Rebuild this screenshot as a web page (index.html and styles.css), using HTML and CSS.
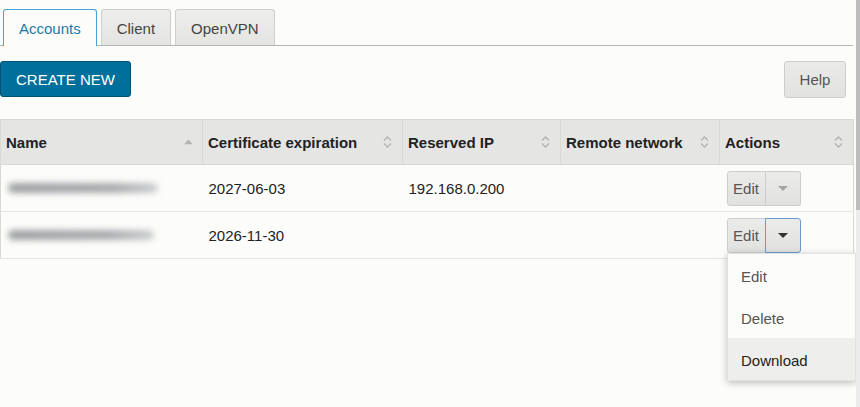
FILE: index.html
```html
<!DOCTYPE html>
<html lang="en">
<head>
    <meta charset="UTF-8">
    <meta name="viewport" content="width=device-width, initial-scale=1.0">
    <title>OpenVPN Accounts</title>
    <link rel="stylesheet" href="styles.css">
</head>
<body>
    <div class="page">
        <ul class="tabs">
            <li class="tab active">Accounts</li>
            <li class="tab">Client</li>
            <li class="tab">OpenVPN</li>
        </ul>

        <div class="toolbar">
            <button type="button" class="btn btn-primary">CREATE NEW</button>
            <button type="button" class="btn btn-help">Help</button>
        </div>

        <table class="grid">
            <colgroup>
                <col class="col-name">
                <col class="col-cert">
                <col class="col-ip">
                <col class="col-net">
                <col class="col-act">
            </colgroup>
            <thead>
                <tr>
                    <th>Name <span class="sort sort-up"><svg width="9" height="5" viewBox="0 0 9 5"><path d="M0 5 L4.5 0 L9 5 Z" fill="#b3b3b3"/></svg></span></th>
                    <th>Certificate expiration <span class="sort"><svg width="9" height="12" viewBox="0 0 9 12"><path d="M1 4.5 L4.5 1 L8 4.5 M1 7.5 L4.5 11 L8 7.5" fill="none" stroke="#b3b3b3" stroke-width="1.4"/></svg></span></th>
                    <th>Reserved IP <span class="sort"><svg width="9" height="12" viewBox="0 0 9 12"><path d="M1 4.5 L4.5 1 L8 4.5 M1 7.5 L4.5 11 L8 7.5" fill="none" stroke="#b3b3b3" stroke-width="1.4"/></svg></span></th>
                    <th>Remote network <span class="sort"><svg width="9" height="12" viewBox="0 0 9 12"><path d="M1 4.5 L4.5 1 L8 4.5 M1 7.5 L4.5 11 L8 7.5" fill="none" stroke="#b3b3b3" stroke-width="1.4"/></svg></span></th>
                    <th>Actions <span class="sort"><svg width="9" height="12" viewBox="0 0 9 12"><path d="M1 4.5 L4.5 1 L8 4.5 M1 7.5 L4.5 11 L8 7.5" fill="none" stroke="#b3b3b3" stroke-width="1.4"/></svg></span></th>
                </tr>
            </thead>
            <tbody>
                <tr>
                    <td><div class="blurred"></div></td>
                    <td>2027-06-03</td>
                    <td>192.168.0.200</td>
                    <td></td>
                    <td>
                        <div class="split">
                            <button type="button" class="split-main">Edit</button>
                            <button type="button" class="split-caret"><span class="caret caret-light"></span></button>
                        </div>
                    </td>
                </tr>
                <tr>
                    <td><div class="blurred short"></div></td>
                    <td>2026-11-30</td>
                    <td></td>
                    <td></td>
                    <td>
                        <div class="split">
                            <button type="button" class="split-main">Edit</button>
                            <button type="button" class="split-caret focused"><span class="caret"></span></button>
                        </div>
                    </td>
                </tr>
            </tbody>
        </table>

        <!-- open dropdown of the second row -->
        <ul class="menu">
            <li>Edit</li>
            <li>Delete</li>
            <li class="hover">Download</li>
        </ul>
    </div>
    <div class="scrollbar"><div class="thumb"></div></div>
</body>
</html>
```

FILE: styles.css
```css
body {
    font-family: "Liberation Sans", Arial, sans-serif;
    font-size: 15px;
    background-color: #fcfcfa;
    color: #222;
    margin: 0;
    padding: 0;
    min-height: 100vh;
}

.page {
    position: relative;
    width: 853px;
    min-height: 398px;
    padding-top: 9px;
}

.tabs {
    list-style: none;
    margin: 0;
    padding: 0 0 0 3px;
    display: flex;
    gap: 4px;
    border-bottom: 1px solid #b5b5b5;
}

.tab {
    height: 35px;
    line-height: 37px;
    padding: 0 15px;
    border: 1px solid #cfcfcf;
    border-bottom: none;
    border-radius: 3px 3px 0 0;
    background: linear-gradient(#ededeb, #e4e5e3);
    color: #444;
    margin-bottom: -1px;
}

.tab.active {
    background: #fcfcfa;
    border-color: #4aa3d8;
    color: #1c7aa8;
    height: 36px;
}

.toolbar {
    display: flex;
    justify-content: space-between;
    margin-top: 15px;
    padding-right: 7px;
}

.btn {
    font-family: inherit;
    font-size: 15px;
    height: 36px;
    border-radius: 3px;
    cursor: pointer;
    white-space: nowrap;
}

.btn-primary {
    background-color: #006f9b;
    border: 1px solid #005274;
    color: #ffffff;
    padding: 0 15px;
}

.btn-help {
    background: linear-gradient(#eaebe9, #e2e3e1);
    border: 1px solid #cdcdcd;
    color: #555;
    width: 62px;
    height: 37px;
}

.grid {
    margin-top: 21px;
    width: 853px;
    border-collapse: collapse;
    table-layout: fixed;
}

.col-name { width: 202px; }
.col-cert { width: 200px; }
.col-ip { width: 158px; }
.col-net { width: 159px; }
.col-act { width: 134px; }

.grid th,
.grid td {
    text-align: left;
    padding: 0 6px;
}

.grid th {
    background-color: #e5e6e4;
    height: 44px;
    padding: 0 5px;
    font-weight: bold;
    color: #222;
    border: 1px solid #d8d9d7;
    position: relative;
}

.sort {
    position: absolute;
    right: 10px;
    top: 50%;
    transform: translateY(-50%);
    line-height: 0;
}

.sort-up {
    right: 9px;
}

.grid td {
    height: 46px;
    border-bottom: 1px solid #e4e4e2;
    color: #222;
}

.grid td:first-child {
    border-left: 1px solid #d8d9d7;
}

.grid td:last-child {
    border-right: 1px solid #d8d9d7;
    padding-left: 7px;
}

.blurred {
    width: 150px;
    height: 10px;
    margin-left: 1px;
    background: linear-gradient(to right, #8e9093, #9a9c9f 70%, #c4c6c8);
    border-radius: 5px;
    filter: blur(3px);
    opacity: 0.85;
}

.blurred.short {
    width: 146px;
}

.split {
    display: flex;
    width: 74px;
}

.split-main,
.split-caret {
    font-family: inherit;
    font-size: 15px;
    height: 35px;
    background: linear-gradient(#ebecea, #e1e2e0);
    border: 1px solid #cdcdcd;
    color: #555;
    cursor: pointer;
    padding: 0;
}

.split-main {
    width: 39px;
    border-radius: 3px 0 0 3px;
}

.split-caret {
    width: 35px;
    border-left: none;
    border-radius: 0 3px 3px 0;
    display: flex;
    align-items: center;
    justify-content: center;
}

.split-caret.focused {
    border: 1px solid #6b9bd1;
    margin-left: -1px;
    width: 36px;
}

.caret {
    width: 0;
    height: 0;
    border-left: 5px solid transparent;
    border-right: 5px solid transparent;
    border-top: 5px solid #333;
}

.caret-light {
    border-top-color: #a5a5a5;
}

.menu {
    position: absolute;
    top: 253px;
    left: 727px;
    width: 127px;
    margin: 0;
    padding: 0;
    list-style: none;
    background: #fcfcfa;
    border: 1px solid #e2e2e0;
    box-shadow: 0 2px 7px rgba(0, 0, 0, 0.25);
    z-index: 2;
}

.menu li {
    height: 42px;
    line-height: 46px;
    padding-left: 13px;
    color: #555;
}

.menu li.hover {
    background-color: #eeefec;
    color: #222;
}

.scrollbar {
    position: fixed;
    top: 0;
    right: 0;
    width: 4px;
    height: 100%;
    background: #ececec;
    z-index: 3;
}

.thumb {
    height: 210px;
    background: #bdbdbd;
}
```
